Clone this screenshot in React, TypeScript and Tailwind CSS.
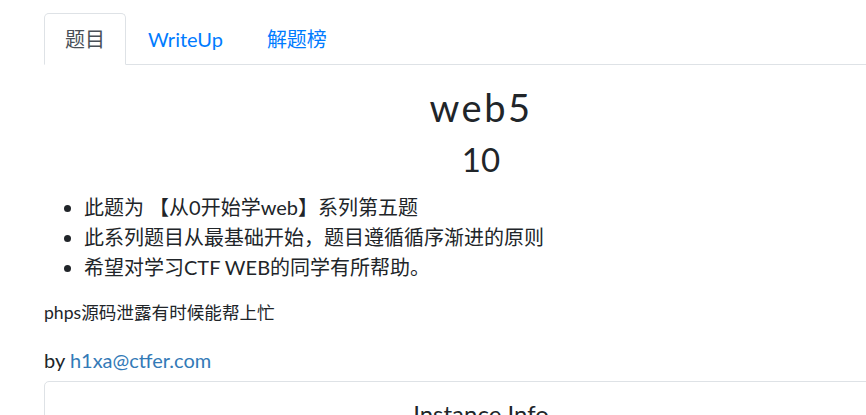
import React from "react";

const tabs = ["题目", "WriteUp", "解题榜"];

const points = [
  "此题为 【从0开始学web】系列第五题",
  "此系列题目从最基础开始，题目遵循循序渐进的原则",
  "希望对学习CTF WEB的同学有所帮助。",
];

const App = () => {
  return (
    <div
      className="w-[866px] h-[415px] overflow-hidden bg-white text-[#212529]"
      style={{ fontFamily: "Lato, 'Noto Sans CJK SC', sans-serif" }}
    >
      <div className="w-[874px] ml-[44px] pt-[13px]">
        {/* tabs */}
        <ul className="flex border-b border-[#dee2e6]">
          {tabs.map((t, i) => (
            <li key={t} className="-mb-px">
              <span
                className={
                  i === 0
                    ? "block px-[20px] py-[10px] text-[20px] leading-[30px] text-[#495057] bg-white border border-[#dee2e6] border-b-white rounded-t-[5px]"
                    : "block px-[21px] py-[10px] text-[20px] leading-[30px] text-[#007bff] border border-transparent"
                }
              >
                {t}
              </span>
            </li>
          ))}
        </ul>

        <div className="pt-[19px]">
          <h3 className="text-center text-[38px] leading-[46px] tracking-[2.5px] font-normal">
            web5
          </h3>
          <h4 className="mt-[8px] text-center text-[33px] leading-[42px] font-normal">
            10
          </h4>

          <ul className="list-disc pl-[40px] mt-[12px] text-[20px] leading-[30px]">
            {points.map((p) => (
              <li key={p}>{p}</li>
            ))}
          </ul>

          <p className="mt-[18px] text-[17.6px] leading-[26px]">
            phps源码泄露有时候能帮上忙
          </p>

          <p className="mt-[19px] text-[20px] leading-[30px]">
            by <a className="text-[#337ab7]">h1xa@ctfer.com</a>
          </p>

          <div className="mt-[6px] border border-[#dee2e6] rounded-[5px] pt-[17px] pb-[20px]">
            <h4 className="text-center text-[24px] leading-[30px] font-normal">
              Instance Info
            </h4>
          </div>
        </div>
      </div>
    </div>
  );
};

export default App;
